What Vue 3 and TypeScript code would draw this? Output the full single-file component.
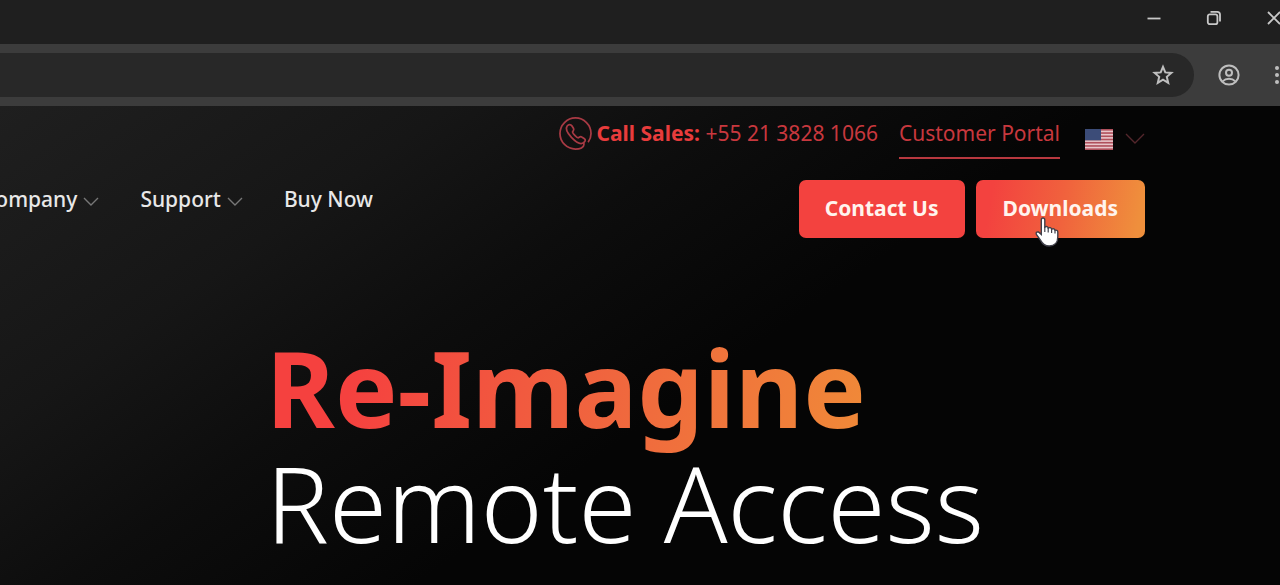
<script setup lang="ts">
interface NavItem {
  label: string
  menu: boolean
}

const navItems: NavItem[] = [
  { label: 'Company', menu: true },
  { label: 'Support', menu: true },
  { label: 'Buy Now', menu: false },
]

const stripes: number[] = [0, 1, 2, 3, 4, 5, 6]
</script>

<template>
  <div class="window">
    <div class="titlebar">
      <button class="icon-button" aria-label="Minimize">
        <svg width="16" height="16" viewBox="0 0 16 16"><path d="M1.5 8.5H14.5" /></svg>
      </button>
      <button class="icon-button" aria-label="Restore">
        <svg width="16" height="16" viewBox="0 0 16 16">
          <rect x="1.8" y="4.4" width="9.6" height="9.8" rx="2" />
          <path d="M4.5 1.8H11.2Q14 1.8 14 4.6V11.5" />
        </svg>
      </button>
      <button class="icon-button" aria-label="Close">
        <svg width="16" height="16" viewBox="0 0 16 16"><path d="M2 2L14 14M14 2L2 14" /></svg>
      </button>
    </div>

    <div class="toolbar">
      <div class="address">
        <button class="icon-button" aria-label="Bookmark this page">
          <svg width="22" height="22" viewBox="0 0 22 22">
            <path class="star" d="M11 2.8L13.3 8.4L19.4 8.9L14.8 12.8L16.2 18.8L11 15.6L5.8 18.8L7.2 12.8L2.6 8.9L8.7 8.4Z" />
          </svg>
        </button>
      </div>
      <button class="icon-button profile" aria-label="Profile">
        <svg width="22" height="22" viewBox="0 0 22 22">
          <circle cx="11" cy="11" r="9.6" />
          <circle cx="11" cy="8.8" r="3" />
          <path d="M4.6 17.4Q7.2 14.8 11 14.8T17.4 17.4" />
        </svg>
      </button>
      <button class="icon-button" aria-label="Browser menu">
        <svg class="dots" width="6" height="22" viewBox="0 0 6 22">
          <circle cx="3" cy="4" r="2" /><circle cx="3" cy="11" r="2" /><circle cx="3" cy="18" r="2" />
        </svg>
      </button>
    </div>

    <div class="page">
      <header>
        <div class="utility">
          <a class="sales" href="#sales">
            <svg class="phone" width="33" height="33" viewBox="0 0 34 34">
              <path d="M30 26C32 23.4 33 20.4 33 17A16 16 0 1 0 17 33C20.8 33 24.4 32 25.3 29.8C26 28.2 25.8 27 25.3 26" />
              <path d="M8.4 9.2C10 7.2 12.2 7.4 13.2 9L15 11.8C15.8 13.2 14.6 14.2 14 15.2C13.6 16.4 18.6 21.8 20 21.4C21.2 20.8 22 19.6 23.4 20.6L26.2 22.4C27.8 23.6 27 25 25.6 26.2C22 29.4 16.4 24.8 12.8 21C9.4 17.2 6 12.4 8.4 9.2Z" />
            </svg>
            <span><strong>Call Sales:</strong> +55 21 3828 1066</span>
          </a>
          <a class="portal" href="#portal">Customer Portal</a>
          <button class="language" aria-label="Language: English (United States)">
            <svg width="28" height="21" viewBox="0 0 28 21">
              <rect width="28" height="21" fill="#e8c6ca" />
              <rect v-for="i in stripes" :key="i" x="0" :y="i * 3.23" width="28" height="1.62" fill="#b0505c" />
              <rect width="16" height="11.3" fill="#3c4c78" />
            </svg>
            <svg class="chevron" width="20" height="12" viewBox="0 0 20 12"><path d="M1 1L10 10L19 1" /></svg>
          </button>
        </div>

        <div class="mainbar">
          <nav aria-label="Main">
            <a v-for="item in navItems" :key="item.label" href="#menu">
              {{ item.label }}
              <svg v-if="item.menu" width="16" height="10" viewBox="0 0 16 10"><path d="M1 1L8 8L15 1" /></svg>
            </a>
          </nav>
          <div class="actions">
            <button class="contact">Contact Us</button>
            <button class="downloads">
              Downloads
              <svg class="pointer" width="24" height="30" viewBox="0 0 24 30" aria-hidden="true">
                <path d="M6.3 3Q6.3 1 8 1T9.8 3V10Q12.6 8.6 13.2 11Q15.8 9.8 16.6 12.2Q19.2 11 20 13.2Q23 12.6 22.8 15.6V20C22.8 25.4 19.6 29 14.2 29C9.8 29 7.6 27.2 5.8 23.6L1.4 17.4Q.4 14.6 3.4 15L6.3 17.4Z" />
                <path class="fingers" d="M9.8 10V15M13.2 11V15.5M16.6 12.2V16M20 13.2V16.5" />
              </svg>
            </button>
          </div>
        </div>
      </header>

      <h1><span class="accent">Re-Imagine</span><span class="light">Remote Access</span></h1>
    </div>
  </div>
</template>

<style>
body {
  margin: 0;
  background: #050505;
}
</style>

<style scoped>
.window {
  display: flex;
  flex-direction: column;
  min-height: 100vh;
  overflow: hidden;
  background: #1f1f1f;
  font-family: "Noto Sans", "Open Sans", sans-serif;
}

button {
  padding: 0;
  border: 0;
  background: none;
  font: inherit;
  color: inherit;
}

a {
  color: inherit;
  text-decoration: none;
}

svg {
  display: block;
  flex: none;
  fill: none;
  stroke: currentColor;
}

.titlebar {
  display: flex;
  justify-content: flex-end;
  align-items: center;
  gap: 44px;
  height: 36px;
  padding-bottom: 8px;
  margin-right: -2px;
  color: #c8c8c8;
}

.titlebar svg {
  stroke-width: 1.8;
}

.toolbar {
  display: flex;
  align-items: center;
  height: 62px;
  background: #3c3c3c;
  color: #bebebe;
}

.address {
  display: flex;
  flex: 1;
  align-items: center;
  justify-content: flex-end;
  height: 44px;
  padding-right: 20px;
  border-radius: 0 22px 22px 0;
  background: #282828;
}

.toolbar svg {
  stroke-width: 2;
}

.profile {
  margin: 0 34px 0 24px;
}

.toolbar .dots {
  fill: currentColor;
  stroke: none;
}

.page {
  flex: 1;
  background: linear-gradient(145deg, #1f1f1f 0%, #161616 23%, #0d0d0d 38%, #050505 56%);
}

header {
  padding: 9px 135px 0 0;
}

.utility {
  display: flex;
  justify-content: flex-end;
  align-items: flex-start;
  color: #c8383e;
  font-size: 21px;
  line-height: 36px;
}

.sales {
  display: flex;
  align-items: center;
  gap: 4px;
  margin-right: 21px;
}

.sales strong {
  color: #e83c3c;
}

.phone {
  stroke: #a83a44;
  stroke-width: 1.8;
}

.portal {
  padding-bottom: 6px;
  border-bottom: 2px solid #b8383f;
}

.language {
  display: flex;
  align-items: center;
  gap: 12px;
  height: 48px;
  margin-left: 25px;
}

.language svg:first-child {
  stroke: none;
}

.chevron {
  color: #54272c;
  stroke-width: 1.4;
}

.mainbar {
  display: flex;
  justify-content: space-between;
  align-items: flex-start;
  margin-top: 17px;
}

nav {
  display: flex;
  justify-content: flex-end;
  gap: 41px;
  width: 373px;
  overflow: hidden;
  color: #e8e8e8;
  font-size: 21px;
  font-weight: 500;
  line-height: 38px;
}

nav a {
  display: flex;
  flex: none;
  align-items: center;
  gap: 6px;
}

nav svg {
  margin-top: 6px;
  color: #777777;
  stroke-width: 1.4;
}

.actions {
  display: flex;
  gap: 11px;
}

.actions button {
  height: 58px;
  padding: 0 26px 2px;
  border-radius: 7px;
  color: #fff4ee;
  font-size: 21px;
  font-weight: 700;
}

.contact {
  background: #f3423f;
}

.actions .downloads {
  position: relative;
  padding: 0 27px 2px;
  background: linear-gradient(100deg, #f3423f 10%, #f0613d 50%, #ef8f3c 95%);
}

.pointer {
  position: absolute;
  left: 59px;
  top: 37px;
  fill: #ffffff;
  stroke: #40404a;
  stroke-width: 1.4;
}

.pointer .fingers {
  fill: none;
  stroke-width: 1.2;
}

h1 {
  display: flex;
  flex-direction: column;
  align-items: flex-start;
  margin: 92px 0 0 266px;
  font-size: 105px;
  line-height: 115px;
}

.accent {
  padding-bottom: 12px;
  background: linear-gradient(100deg, #f5413f 15%, #f0603f 50%, #f08a38 100%);
  background-clip: text;
  color: transparent;
  font-weight: 700;
}

.light {
  color: #ffffff;
  font-weight: 300;
  line-height: 91px;
}
</style>
